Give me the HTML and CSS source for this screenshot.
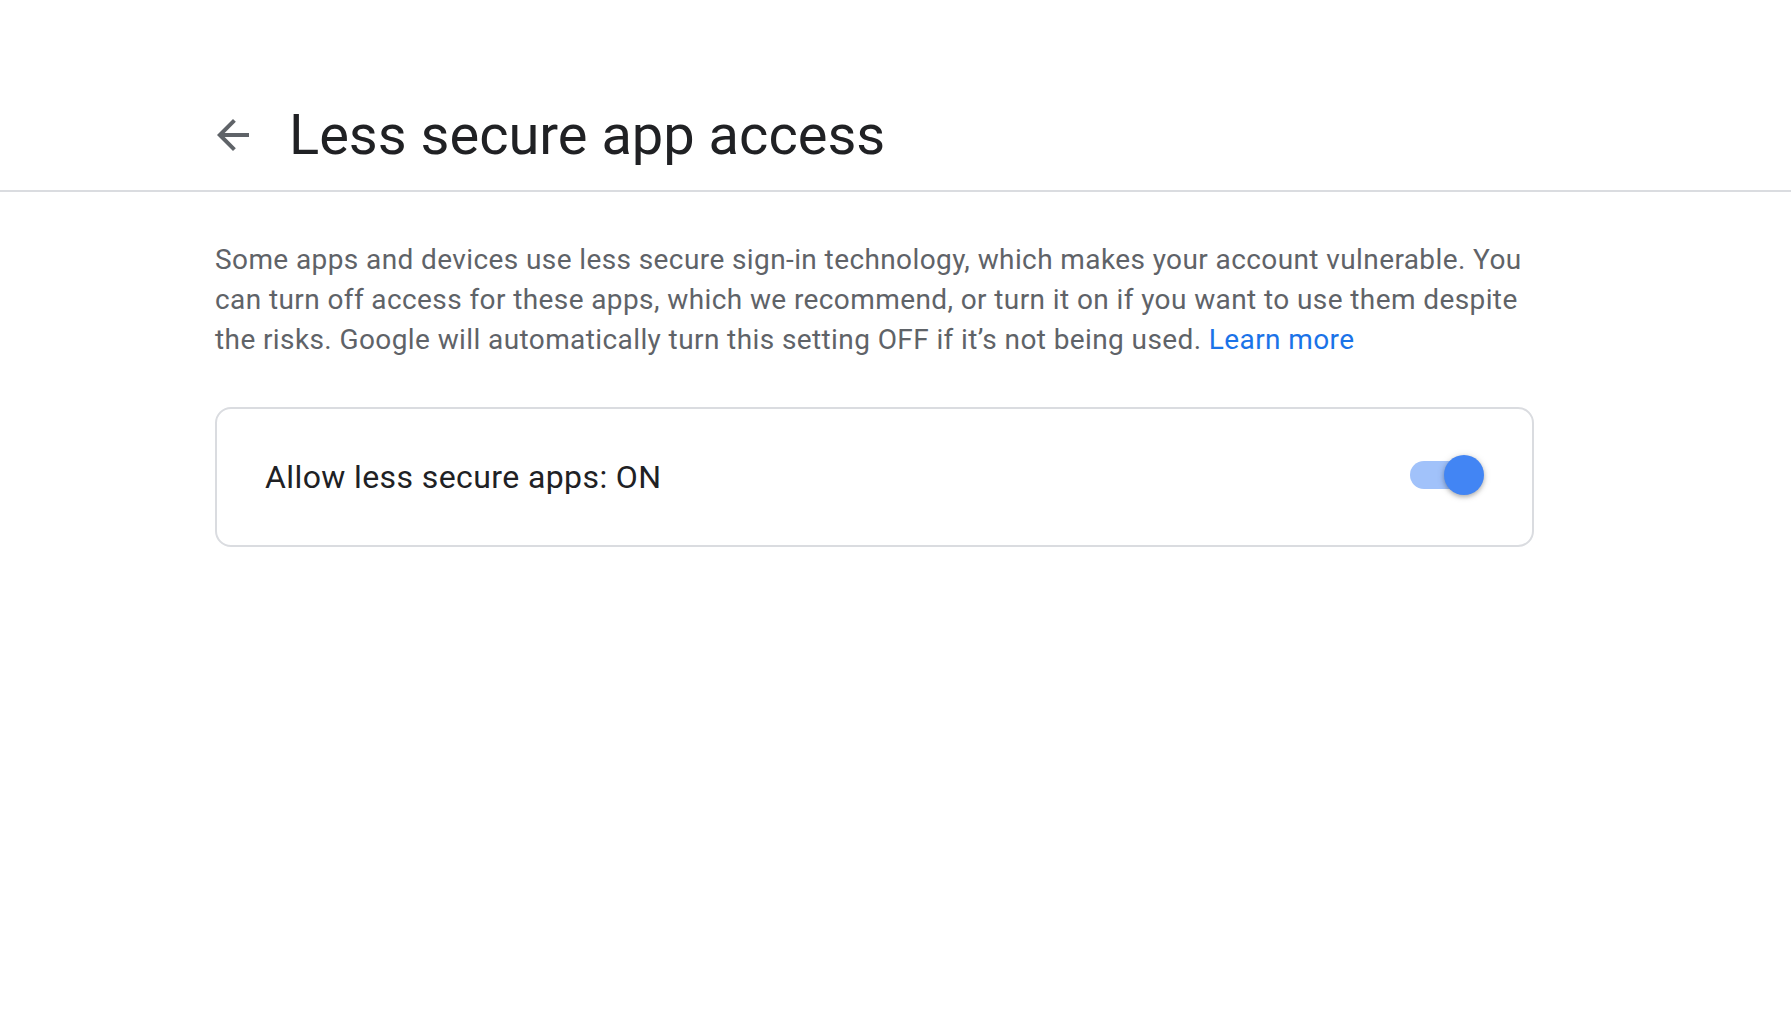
FILE: index.html
```html
<!DOCTYPE html>
<html lang="en">
<head>
<meta charset="utf-8">
<title>Less secure app access</title>
<link rel="stylesheet" href="styles.css">
</head>
<body>
<header class="header">
  <a class="back" href="#" aria-label="Back">
    <svg viewBox="0 0 24 24" width="48" height="48"><path d="M20 11H7.83l5.59-5.59L12 4l-8 8 8 8 1.41-1.41L7.83 13H20v-2z" fill="#5f6368"/></svg>
  </a>
  <h1 class="title">Less secure app access</h1>
</header>
<main class="content">
  <p class="intro">Some apps and devices use less secure sign-in technology, which makes your account vulnerable. You can turn off access for these apps, which we recommend, or turn it on if you want to use them despite the risks. Google will automatically turn this setting OFF if it’s not being used. <a class="link" href="#">Learn more</a></p>
  <div class="card">
    <span class="label">Allow less secure apps: ON</span>
    <span class="switch"><span class="track"></span><span class="thumb"></span></span>
  </div>
</main>
</body>
</html>
```
FILE: styles.css
```css
html, body { margin: 0; padding: 0; background: #fff; }
body { font-family: Roboto, "Liberation Sans", sans-serif; color: #202124; }

.header {
  display: flex;
  align-items: center;
  height: 110px;
  padding: 80px 0 0 209px;
  border-bottom: 2px solid #dadce0;
  box-sizing: content-box;
}
.back { display: flex; width: 48px; height: 48px; }
.title {
  margin: 0 0 0 32px;
  font-family: Roboto, sans-serif;
  font-weight: 400;
  font-size: 56px;
  line-height: 64px;
  color: #202124;
}

.content { padding: 48px 0 0 215px; width: 1319px; }
.intro {
  margin: 0;
  font-size: 28px;
  line-height: 40px;
  letter-spacing: 0.4px;
  color: #5f6368;
}
.link { color: #1a73e8; text-decoration: none; }

.card {
  margin-top: 47px;
  box-sizing: border-box;
  height: 140px;
  border: 2px solid #dadce0;
  border-radius: 16px;
  padding: 0 48px;
  display: flex;
  align-items: center;
  justify-content: space-between;
}
.label { font-size: 32px; line-height: 40px; letter-spacing: 0.4px; color: #202124; }
.switch { position: relative; width: 74px; height: 40px; margin-top: -5px; }
.track {
  position: absolute; left: 0; top: 6px;
  width: 70px; height: 28px; border-radius: 14px;
  background: #a1c2fa;
}
.thumb {
  position: absolute; right: 0; top: 0;
  width: 40px; height: 40px; border-radius: 50%;
  background: #4285f4;
  box-shadow: 0 2px 4px rgba(0,0,0,.25), 0 1px 8px rgba(0,0,0,.12);
}
```
